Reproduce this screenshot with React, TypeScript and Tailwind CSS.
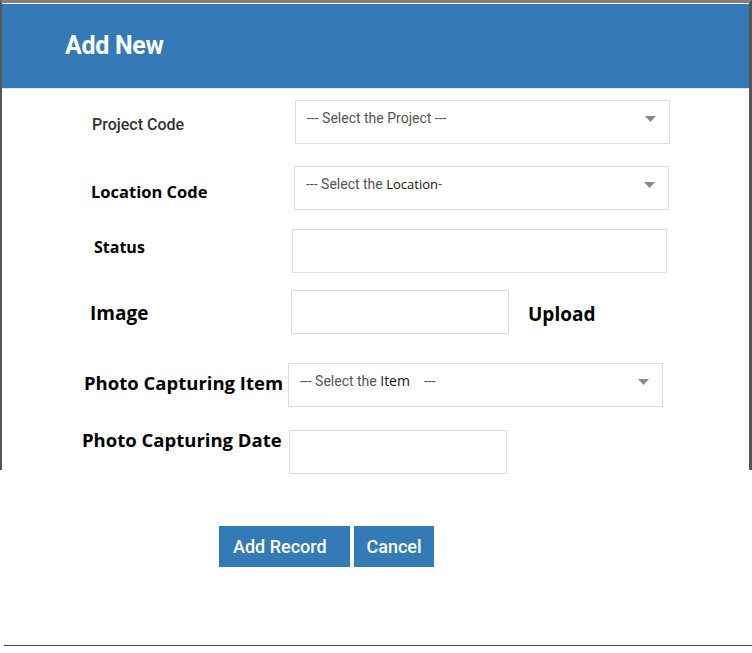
import React from "react";

const roboto = "font-['Roboto','Liberation_Sans',sans-serif]";
const sans = "font-['Open_Sans','Liberation_Sans',sans-serif]";

function Caret() {
  return (
    <svg width="11" height="6" viewBox="0 0 11 6" className="shrink-0">
      <path d="M0 0 L11 0 L5.5 6 Z" fill="#888" />
    </svg>
  );
}

function SelectBox({ children, w }: { children: React.ReactNode; w: string }) {
  return (
    <div
      className={`${w} h-[44px] border border-[#ddd] bg-white flex items-start justify-between pl-[11px] pr-[13px] pt-[7px]`}
    >
      <div className={`${roboto} text-[14px] leading-[20px] text-[#555] whitespace-nowrap`}>{children}</div>
      <div className="pt-[8px]">
        <Caret />
      </div>
    </div>
  );
}

function TextBox({ w }: { w: string }) {
  return <div className={`${w} h-[44px] border border-[#ddd] bg-white shrink-0`} />;
}

export default function App() {
  return (
    <div className="w-[752px] h-[653px] bg-white overflow-hidden">
      <div className="h-[470px] border-t-[3px] border-t-[#7f7f7f] border-l-2 border-l-[#555] border-r-[3px] border-r-[#555]">
        <div className="mt-px h-[85px] bg-[#337ab7] border-b border-b-[#dde8f3] flex items-center pl-[63px]">
          <h1 className={`${roboto} text-[25px] font-bold text-white tracking-[-0.3px]`}>Add New</h1>
        </div>

        {/* Project Code */}
        <div className="flex items-start mt-[11px] pl-[90px]">
          <div className={`${roboto} w-[203px] mt-[13px] text-[16px] leading-[24px] font-medium text-[#333]`}>
            Project Code
          </div>
          <SelectBox w="w-[375px]">--- Select the Project ---</SelectBox>
        </div>

        {/* Location Code */}
        <div className="flex items-start mt-[22px] pl-[89px]">
          <div className={`${sans} w-[203px] mt-[14px] text-[16.5px] leading-[24px] font-bold text-black whitespace-nowrap`}>
            Location Code
          </div>
          <SelectBox w="w-[375px]">
            --- Select the <span className={`${sans} text-[13px] text-[#111]`}>Location</span>
            <span>-</span>
          </SelectBox>
        </div>

        {/* Status */}
        <div className="flex items-start mt-[19px] pl-[92px]">
          <div className={`${sans} w-[198px] mt-[7px] text-[16px] leading-[22px] font-bold text-black`}>Status</div>
          <TextBox w="w-[375px]" />
        </div>

        {/* Image */}
        <div className="flex items-start mt-[17px] pl-[88px]">
          <div className={`${sans} w-[201px] mt-[9px] text-[19px] leading-[28px] font-bold text-black`}>Image</div>
          <TextBox w="w-[218px]" />
          <div className={`${sans} ml-[19px] mt-[10px] text-[19px] leading-[28px] font-bold text-black`}>Upload</div>
        </div>

        {/* Photo Capturing Item */}
        <div className="flex items-start mt-[29px] pl-[82px]">
          <div
            className={`${sans} w-[204px] shrink-0 mt-[7px] text-[18.5px] leading-[26px] font-bold text-black whitespace-nowrap`}
          >
            Photo Capturing Item
          </div>
          <SelectBox w="w-[375px]">
            --- Select the <span className={`${sans} text-[14px] text-[#112]`}>Item</span>
            <span className="ml-[14px]">---</span>
          </SelectBox>
        </div>

        {/* Photo Capturing Date */}
        <div className="flex items-start mt-[23px] pl-[80px]">
          <div
            className={`${sans} w-[207px] shrink-0 -mt-[3px] text-[18.5px] leading-[26px] font-bold text-black whitespace-nowrap`}
          >
            Photo Capturing Date
          </div>
          <TextBox w="w-[218px]" />
        </div>
      </div>

      <div className="flex gap-[4px] mt-[56px] pl-[219px]">
        <button
          className={`${roboto} w-[131px] h-[41px] pl-[14px] text-left bg-[#337ab7] text-white text-[18px] font-medium`}
        >
          Add Record
        </button>
        <button className={`${roboto} w-[80px] h-[41px] bg-[#337ab7] text-white text-[18px] font-medium`}>
          Cancel
        </button>
      </div>

      <div className="mt-[78px] ml-[4px] h-px bg-[#444]" />
    </div>
  );
}
